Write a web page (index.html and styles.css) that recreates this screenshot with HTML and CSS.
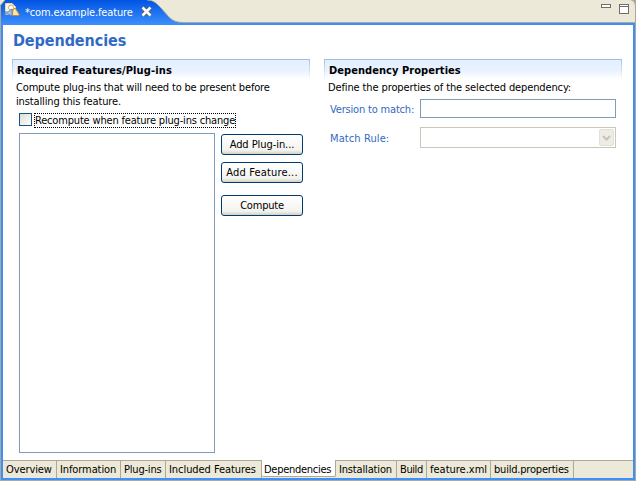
FILE: index.html
```html
<!DOCTYPE html>
<html lang="en">
<head>
<meta charset="utf-8">
<title>com.example.feature</title>
<link rel="stylesheet" href="styles.css">
</head>
<body>
<div class="window">
  <header class="titlebar">
    <div class="editor-tab">
      <svg class="tab-shape" width="184" height="25" viewBox="0 0 184 25">
        <defs><linearGradient id="g" x1="0" y1="0" x2="0" y2="1"><stop offset="0" stop-color="#0254e3"/><stop offset="1" stop-color="#3c90fc"/></linearGradient></defs>
        <path d="M1 25V5L5 0H147C154 0 157 4 161 8L169 17C173 21 177 22.5 184 22.5V25Z" fill="url(#g)"/>
        <path d="M0.5 25V5L5 0M147 0C154 0 157 4 161 8L169 17C173 21 177 22.5 184 22.5" fill="none" stroke="#aca899"/>
      </svg>
      <svg class="file-icon" width="16" height="16" viewBox="0 0 16 16">
        <path d="M1.500 13V1.500H8L11.500 5V9" fill="#fff8e4" stroke="#e0b566"/>
        <path d="M1.500 1.500H8L11.500 5V13H1.500z" fill="#fff8e4"/>
        <circle cx="7" cy="5.500" r="2.500" fill="#fffdf4" stroke="#d9a850"/>
        <path d="M9 8l2-2 4 6v1.500H8z" fill="#fbe6b0" stroke="#c08c38"/>
        <path d="M1 10h3l4-3v7l-4-2H1z" fill="#a9c4ea" stroke="#6482b4"/>
      </svg>
      <span class="tab-title">*com.example.feature</span>
      <svg class="close" width="11" height="11" viewBox="0 0 11 11"><path d="M2 2l7 7M9 2l-7 7" stroke="#5a5a50" stroke-width="4.400"/><path d="M1.500 1.500l8 8M9.500 1.500l-8 8" stroke="#fff" stroke-width="2.600"/></svg>
    </div>
    <div class="window-tools"><i class="minimize"></i><i class="maximize"></i></div>
  </header>
  <div class="frame">
    <main class="form">
      <h1>Dependencies</h1>
      <div class="columns">
        <section class="left">
          <h2><span class="s1">Required Features/Plug-ins</span></h2>
          <p><span class="s2">Compute plug-ins that will need to be present before</span><br><span class="s3">installing this feature.</span></p>
          <div class="check"><i class="box"></i><label><span class="s4">Recompute when feature plug-ins change</span></label></div>
          <div class="picker">
            <div class="list"></div>
            <div class="buttons">
              <button><span class="b1">Add Plug-in...</span></button>
              <button><span class="b2">Add Feature...</span></button>
              <button class="compute"><span class="b3">Compute</span></button>
            </div>
          </div>
        </section>
        <section class="right">
          <h2><span class="s5">Dependency Properties</span></h2>
          <p><span class="s6">Define the properties of the selected dependency:</span></p>
          <div class="field"><span class="name"><span class="s7">Version to match:</span></span><div class="input"></div></div>
          <div class="field rule"><span class="name"><span class="s8">Match Rule:</span></span><div class="combo"><i class="arrow"><svg width="9" height="6" viewBox="0 0 9 6"><path d="M1 1l3.500 3.500L8 1" fill="none" stroke="#c5c4b6" stroke-width="2"/></svg></i></div></div>
        </section>
      </div>
    </main>
    <nav class="pages">
      <span class="t1">Overview</span><span class="t2">Information</span><span class="t3">Plug-ins</span><span class="t4">Included Features</span><span class="t5 active">Dependencies</span><span class="t6">Installation</span><span class="t7">Build</span><span class="t8">feature.xml</span><span class="t9">build.properties</span>
    </nav>
  </div>
</div>
</body>
</html>
```
FILE: styles.css
```css
* { box-sizing: border-box; }
body { margin: 0; font: 11px/13px "DejaVu Sans Condensed", "DejaVu Sans", sans-serif; font-stretch: condensed; color: #000; background: #fff; }
.window { width: 636px; height: 481px; display: flex; flex-direction: column; background: #aca899; }
.titlebar { height: 23px; display: flex; justify-content: space-between; background: #ece9d8; border-bottom: 1px solid #aca899; border-right: 1px solid #aca899; border-top-right-radius: 6px; }
.editor-tab { position: relative; width: 184px; height: 25px; display: flex; align-items: flex-start; }
.tab-shape { position: absolute; left: 0; top: 0; }
.file-icon { position: relative; margin: 2px 0 0 4px; }
.tab-title { position: relative; color: #fff; margin: 6px 0 0 5px; width: 116px; white-space: nowrap; letter-spacing: -.15px; }
.close { position: relative; margin-top: 6px; }
.window-tools { display: flex; gap: 8px; padding: 4px 6px 0 0; }
.minimize { width: 10px; height: 4px; border: 1px solid #716f64; background: #fff; }
.maximize { width: 10px; height: 10px; border: 1px solid #716f64; background: linear-gradient(#fff 1px, #716f64 1px, #716f64 2px, #fff 2px); }
.frame { height: 458px; border: solid #aca899; border-width: 0 1px 1px; background: #3c90fc; padding: 2px; display: flex; flex-direction: column; }
.form { flex: 1; background: #fff; padding: 6px 11px 0 9px; }
h1 { margin: 0; height: 28px; font-size: 16px; line-height: 20px; color: #316ac5; padding-left: 1px; font-weight: bold; letter-spacing: -.08px; }
.columns { display: flex; gap: 14px; }
section { width: 298px; }
h2 { margin: 0; height: 20px; border: 1px solid; border-bottom: 0; border-image: linear-gradient(#9fbbe9, #fff) 1; background: linear-gradient(#e4effe, #e8f2ff 55%, #fff); font-size: 11px; line-height: 13px; padding: 4px 0 0 4px; font-weight: bold; white-space: nowrap; }
p { margin: 2px 0 0 4px; white-space: nowrap; height: 27px; line-height: 13.5px; }
.check { display: flex; margin: 5px 0 0 7px; }
.box { width: 13px; height: 13px; border: 1px solid #1c5180; background: linear-gradient(135deg, #dcdcd7, #fff); }
.check label { width: 202px; height: 15px; margin-left: 2px; border: 1px dotted #000; white-space: nowrap; }
.picker { display: flex; margin: 5px 0 0 7px; gap: 6px; }
.list { width: 196px; height: 320px; border: 1px solid #7f9db9; }
.buttons { display: flex; flex-direction: column; gap: 7px; padding-top: 1px; }
button { width: 82px; height: 21px; padding: 0; border: 1px solid #003c74; border-radius: 3px; background: linear-gradient(#fff, #f3f3ee 80%, #d6d0c5); font: inherit; color: #000; white-space: nowrap; }
.compute { margin-top: 5px; }
.right p { height: 15px; }
.field { display: flex; align-items: center; color: #316ac5; margin-left: 6px; height: 19px; margin-top: 3px; }
.name { width: 90px; white-space: nowrap; padding-top: 1px; }
.input { width: 196px; height: 19px; border: 1px solid #7f9db9; }
.rule { margin-top: 9px; height: 21px; }
.combo { width: 196px; height: 21px; border: 1px solid #c9c7ba; display: flex; justify-content: flex-end; padding: 1px; }
.arrow { width: 15px; height: 17px; background: #eeede5; border: 1px solid #e3e1d5; border-radius: 2px; display: flex; align-items: center; justify-content: center; }
.pages { height: 18px; display: flex; background: #ece9d8; border-top: 1px solid #aca899; }
.pages span { border-right: 1px solid #aca899; line-height: 17px; padding-left: 3px; white-space: nowrap; height: 17px; }
.pages .active { background: #fff; margin-top: -1px; line-height: 19px; border-bottom: 1px solid #aca899; border-radius: 0 0 2px 2px; padding-left: 2px; }
.t1 { width: 54px; letter-spacing: -.1px; }
.t2 { width: 64px; letter-spacing: -.1px; }
.t3 { width: 45px; letter-spacing: -.2px; }
.t4 { width: 96px; letter-spacing: -.06px; }
.t5 { width: 74px; letter-spacing: -.27px; }
.t6 { width: 61px; letter-spacing: -.16px; }
.t7 { width: 30px; letter-spacing: -.4px; }
.t8 { width: 64px; }
.t9 { width: 83px; letter-spacing: -.2px; }
.s1 { letter-spacing: .12px; }
.s2 { letter-spacing: -.17px; }
.s3 { letter-spacing: -.13px; }
.s4 { letter-spacing: -.18px; }
.s5 { letter-spacing: .05px; }
.s6 { letter-spacing: -.12px; }
.s7 { letter-spacing: -.18px; }
.s8 { letter-spacing: .1px; }
.b1 { letter-spacing: -.06px; }
.b2 { letter-spacing: .18px; }
.b3 { letter-spacing: -.2px; }
```
